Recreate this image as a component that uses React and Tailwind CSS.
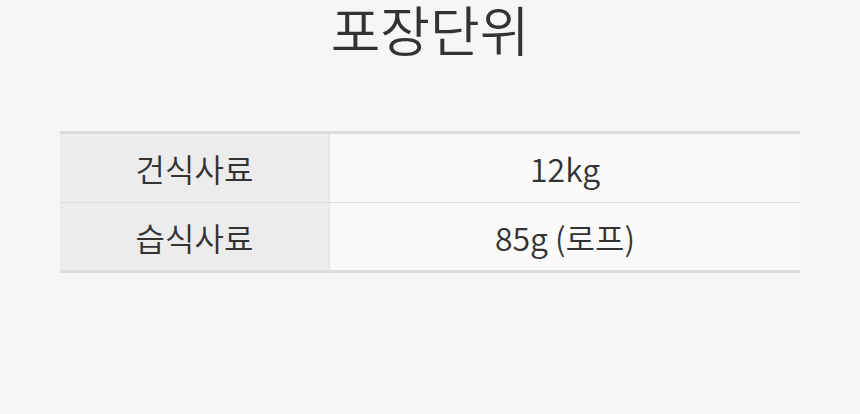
import React from "react";

const rows = [
  { label: "건식사료", value: "12kg" },
  { label: "습식사료", value: "85g (로프)" },
];

const App = () => {
  return (
    <div
      className="w-[860px] h-[414px] bg-[#f6f6f6] text-[#333] overflow-hidden"
      style={{ fontFamily: '"Noto Sans CJK KR", "Noto Sans", sans-serif' }}
    >
      <h2 className="text-center text-[54px] leading-[58px] font-[350]">
        포장단위
      </h2>

      <div className="mx-[60px] mt-[73px] border-t-[3px] border-b-[3px] border-[#dddddd]">
        {rows.map((row, i) => (
          <div
            key={row.label}
            className={`flex h-[68px] ${i > 0 ? "border-t border-[#dcdcdc]" : ""}`}
          >
            <div className="w-[270px] bg-[#ececec] border-r border-[#e2e2e2] flex items-center justify-center text-[32px] font-[350]">
              {row.label}
            </div>
            <div className="flex-1 bg-[#fafafa] flex items-center justify-center text-[32px] font-[350]">
              {row.value}
            </div>
          </div>
        ))}
      </div>
    </div>
  );
};

export default App;
